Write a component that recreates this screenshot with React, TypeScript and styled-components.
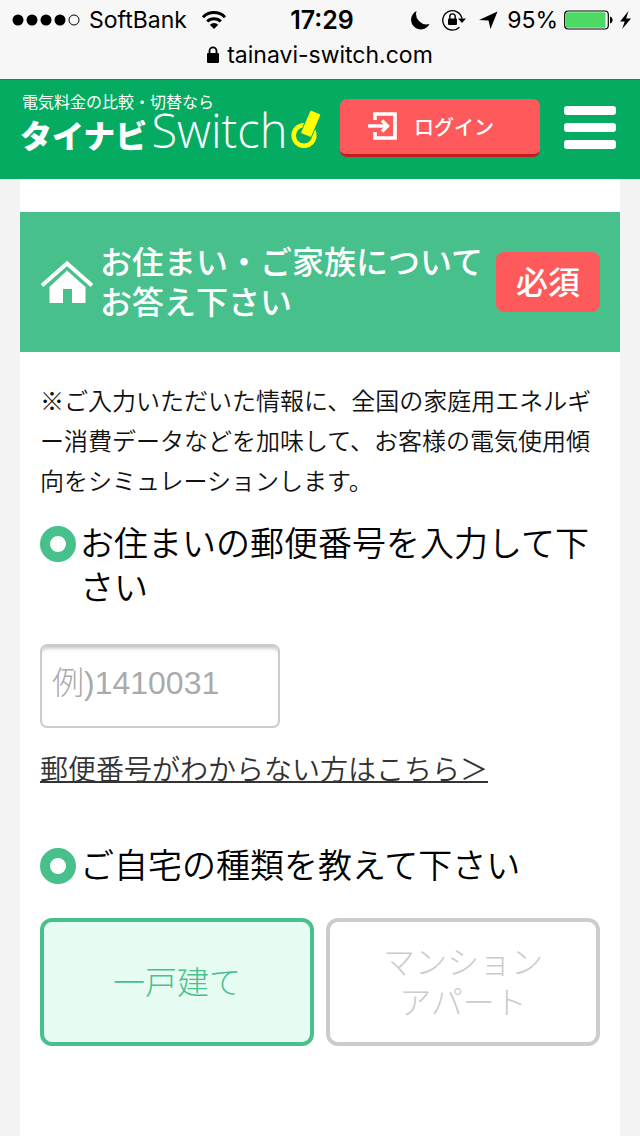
import React, { useState } from "react";
import styled, { createGlobalStyle } from "styled-components";

const jp = `"Noto Sans CJK JP", sans-serif`;
const green = "#48c08c";
const red = "#fe5a5b";

const GlobalStyle = createGlobalStyle`
  * { box-sizing: border-box; }
  body { margin: 0; background: #f3f3f3; color: #111; font-family: ${jp}; }
`;

const Page = styled.div`
  display: flex;
  flex-direction: column;
  min-height: 100vh;
`;

const StatusBar = styled.div`
  height: 80px;
  background: #f7f7f7;
  border-bottom: 1px solid #2f7a5d;
  color: #000;
  font-family: Inter, sans-serif;
  font-size: 23px;
`;

const StatusRow = styled.div`
  display: grid;
  grid-template-columns: 1fr auto 1fr;
  align-items: center;
  height: 40px;
  padding: 0 8px 0 12px;
`;

const StatusGroup = styled.div<{ $end?: boolean }>`
  display: flex;
  align-items: center;
  justify-content: ${(p) => (p.$end ? "flex-end" : "flex-start")};
  gap: ${(p) => (p.$end ? "6px" : "8px")};
`;

const Carrier = styled.span`
  margin-right: 6px;
`;

const StatusIcons = styled.div`
  display: flex;
  align-items: center;
  gap: 12px;
  margin-right: 3px;
`;

const Clock = styled.strong`
  font-size: 25px;
  font-weight: 600;
`;

const AddressRow = styled.div`
  display: flex;
  align-items: center;
  justify-content: center;
  gap: 8px;
  height: 30px;
`;

const Header = styled.header`
  display: flex;
  align-items: center;
  height: 99px;
  padding: 0 24px 4px 20px;
  background: #06ab62;
`;

const Logo = styled.a`
  display: flex;
  flex-direction: column;
  align-self: flex-start;
  margin-top: 12px;
  color: #fff;
  text-decoration: none;
`;

const Tagline = styled.span`
  padding-left: 2px;
  font-size: 16px;
  line-height: 18px;
`;

const WordMark = styled.span`
  display: flex;
  align-items: baseline;
  height: 34px;
  line-height: 34px;
`;

const WordJa = styled.span`
  font-size: 32px;
  font-weight: 900;
`;

const WordEn = styled.span`
  margin: 0 4px;
  font-family: "Open Sans", sans-serif;
  font-size: 47px;
  font-weight: 300;
`;

const LoginButton = styled.button`
  display: flex;
  align-items: center;
  gap: 16px;
  width: 200px;
  height: 58px;
  margin: 0 24px 0 auto;
  padding: 0 0 0 28px;
  border: 0;
  border-bottom: 3px solid #c41c20;
  border-radius: 7px;
  background: ${red};
  color: #fff;
  font-family: ${jp};
  font-size: 20px;
  font-weight: 500;
`;

const MenuButton = styled.button`
  display: flex;
  flex-direction: column;
  gap: 8px;
  width: 52px;
  padding: 0;
  border: 0;
  background: none;
`;

const MenuBar = styled.span`
  height: 9px;
  border-radius: 3px;
  background: #fff;
`;

const Main = styled.main`
  flex: 1;
  margin: 0 20px;
  padding-top: 33px;
  background: #fff;
`;

const SectionHead = styled.div`
  display: flex;
  align-items: center;
  gap: 6px;
  padding: 28px 20px;
  background: ${green};
  color: #fff;
`;

const SectionTitle = styled.h1`
  flex: 1;
  margin: 0;
  padding-bottom: 4px;
  font-size: 32px;
  font-weight: 500;
  line-height: 40px;
`;

const Required = styled.span`
  padding: 8px 20px 12px;
  border-radius: 8px;
  background: ${red};
  font-size: 32px;
  font-weight: 500;
  line-height: 40px;
`;

const Form = styled.form`
  padding: 28px 20px;
`;

const Note = styled.p`
  margin: 0 0 20px;
  font-size: 24px;
  font-weight: 350;
  line-height: 40px;
  line-break: anywhere;
`;

const Question = styled.div`
  display: flex;
  align-items: flex-start;
  gap: 4px;
  color: #000;
  font-size: 34px;
  font-weight: 350;
  line-height: 44px;
`;

const Bullet = styled.span`
  flex: none;
  width: 36px;
  height: 36px;
  margin-top: 6px;
  border: 10px solid ${green};
  border-radius: 50%;
`;

const ZipInput = styled.input`
  display: block;
  width: 240px;
  height: 84px;
  margin: 36px 0 20px;
  padding: 0 10px 6px;
  border: 2px solid #ccc;
  border-radius: 7px;
  background: #fff;
  box-shadow: inset 0 5px 4px -3px #bbb;
  font-family: "Liberation Sans", ${jp};
  font-size: 32px;
  font-weight: 300;

  &::placeholder { color: #aaa; }
`;

const HelpLink = styled.a`
  display: block;
  width: fit-content;
  margin-bottom: 54px;
  color: #333;
  font-size: 28px;
  font-weight: 350;
  line-height: 40px;
  text-decoration: underline;
  text-decoration-thickness: 2px;
  text-underline-offset: 1px;
  text-decoration-skip-ink: none;
`;

const Fieldset = styled.fieldset`
  min-width: 0;
  margin: 0;
  padding: 0;
  border: 0;
`;

const Legend = styled.legend`
  padding: 0;
`;

const Options = styled.div`
  display: grid;
  grid-template-columns: 1fr 1fr;
  gap: 12px;
  margin-top: 32px;
`;

const Option = styled.label<{ $checked: boolean }>`
  display: flex;
  align-items: center;
  justify-content: center;
  height: 128px;
  padding-bottom: 4px;
  border: 4px solid ${(p) => (p.$checked ? green : "#ccc")};
  border-radius: 12px;
  background: ${(p) => (p.$checked ? "#e6fcf2" : "#fff")};
  color: ${(p) => (p.$checked ? green : "#ccc")};
  font-size: 32px;
  font-weight: 300;
  line-height: 40px;
  text-align: center;
  white-space: pre-line;
`;

const HiddenRadio = styled.input`
  position: absolute;
  opacity: 0;
  pointer-events: none;
`;

const homeTypes = [
  { value: "house", label: "一戸建て" },
  { value: "apartment", label: "マンション\nアパート" },
];

const Signal = () => (
  <svg width="69" height="14" viewBox="0 0 69 14">
    {[6, 20, 34, 48].map((x) => <circle key={x} cx={x} cy="7" r="5.5" />)}
    <circle cx="62" cy="7" r="5" fill="none" stroke="#000" />
  </svg>
);

const Wifi = () => (
  <svg width="26" height="20" viewBox="0 0 26 20">
    <path d="M2 7.2a15.5 15.5 0 0 1 22 0M6.2 11.5a9.6 9.6 0 0 1 13.6 0" fill="none" stroke="#000" strokeWidth="3" />
    <path d="M13 19l-4.2-4.3a6 6 0 0 1 8.4 0z" />
  </svg>
);

const Moon = () => (
  <svg width="20" height="20" viewBox="0 0 20 20">
    <path d="M6.5 1A9.7 9.7 0 1 0 19.500 14A10.500 10.500 0 0 1 6.500 1z" />
  </svg>
);

const RotationLock = () => (
  <svg width="24" height="22" viewBox="0 0 24 22">
    <path d="M17.4 18.2A9.7 9.7 0 1 1 20 9.5" fill="none" stroke="#000" strokeWidth="1.4" />
    <path d="M16 9.5h8l-4 4.5z" />
    <rect x="6" y="9.5" width="9" height="6.5" rx="1" />
    <path d="M7.8 10V7.6a2.7 2.7 0 0 1 5.4 0V10" fill="none" stroke="#000" strokeWidth="1.4" />
  </svg>
);

const Location = () => (
  <svg width="20" height="20" viewBox="0 0 20 20">
    <path d="M19.5 1.500L12.500 19l-2-8.500L1 10z" />
  </svg>
);

const Battery = () => (
  <svg width="49" height="20" viewBox="0 0 49 20">
    <rect x=".7" y="1" width="43.6" height="18" rx="3.5" fill="#fff" stroke="#000" strokeWidth="1.2" />
    <rect x="2" y="2.3" width="39.5" height="15.4" rx="1.5" fill="#4cd964" />
    <path d="M46 6.5c3.5 1 3.5 6 0 7z" />
  </svg>
);

const Bolt = () => (
  <svg width="13" height="20" viewBox="0 0 13 20">
    <path d="M9.5 1L1 11.5h4.7L3.2 19 12 8.5H7.2z" />
  </svg>
);

const Padlock = () => (
  <svg width="12" height="18" viewBox="0 0 12 18">
    <rect x="0" y="7" width="12" height="10" rx="1" />
    <path d="M2.5 8V4.8a3.5 3.5 0 0 1 7 0V8" fill="none" stroke="#000" strokeWidth="1.8" />
  </svg>
);

const SwitchMark = () => (
  <svg width="30" height="38" viewBox="0 0 30 38">
    <circle cx="13" cy="25.5" r="10.3" fill="none" stroke="#ff0" strokeWidth="4.6" />
    <path
      d="M20 1.500l8.500 3.500L19.500 26l-8.500-3.500z"
      fill="#ff0"
      stroke="#06ab62"
      strokeWidth="3.4"
      strokeLinejoin="round"
    />
    <path d="M20 1.500l8.500 3.500L19.500 26l-8.500-3.500z" fill="#ff0" stroke="#ff0" strokeWidth="1.6" strokeLinejoin="round" />
  </svg>
);

const LoginIcon = () => (
  <svg width="30" height="30" viewBox="0 0 30 30" fill="none" stroke="#fff">
    <path d="M7 9V3h20v24H7v-6" strokeWidth="3.6" />
    <path d="M0 15h19" strokeWidth="3.4" />
    <path d="M14 9.5l5.5 5.5-5.5 5.5" strokeWidth="3.4" />
  </svg>
);

const House = () => (
  <svg width="54" height="44" viewBox="0 0 54 44">
    <path d="M2 25.5L27 3.5l25 22" fill="none" stroke="#fff" strokeWidth="4" />
    <path d="M27 10.5L45.5 27v16H32V29h-9v14H9.5V27z" fill="#fff" />
  </svg>
);

export default function App() {
  const [homeType, setHomeType] = useState("house");
  return (
    <Page>
      <GlobalStyle />
      <StatusBar>
        <StatusRow>
          <StatusGroup>
            <Signal />
            <Carrier>SoftBank</Carrier>
            <Wifi />
          </StatusGroup>
          <Clock>17:29</Clock>
          <StatusGroup $end>
            <StatusIcons>
              <Moon />
              <RotationLock />
              <Location />
            </StatusIcons>
            <span>95%</span>
            <Battery />
            <Bolt />
          </StatusGroup>
        </StatusRow>
        <AddressRow>
          <Padlock />
          <span>tainavi-switch.com</span>
        </AddressRow>
      </StatusBar>

      <Header>
        <Logo href="#">
          <Tagline>電気料金の比較・切替なら</Tagline>
          <WordMark>
            <WordJa>タイナビ</WordJa>
            <WordEn>Switch</WordEn>
            <SwitchMark />
          </WordMark>
        </Logo>
        <LoginButton type="button">
          <LoginIcon />
          ログイン
        </LoginButton>
        <MenuButton type="button" aria-label="メニュー">
          <MenuBar />
          <MenuBar />
          <MenuBar />
        </MenuButton>
      </Header>

      <Main>
        <SectionHead>
          <House />
          <SectionTitle>お住まい・ご家族についてお答え下さい</SectionTitle>
          <Required>必須</Required>
        </SectionHead>
        <Form>
          <Note>
            ※ご入力いただいた情報に、全国の家庭用エネルギー消費データなどを加味して、お客様の電気使用傾向をシミュレーションします。
          </Note>
          <Question>
            <Bullet />
            <label htmlFor="zip">お住まいの郵便番号を入力して下さい</label>
          </Question>
          <ZipInput id="zip" type="text" inputMode="numeric" placeholder="例)1410031" />
          <HelpLink href="#">郵便番号がわからない方はこちら＞</HelpLink>
          <Fieldset>
            <Legend>
              <Question>
                <Bullet />
                <span>ご自宅の種類を教えて下さい</span>
              </Question>
            </Legend>
            <Options>
              {homeTypes.map((t) => (
                <Option key={t.value} $checked={homeType === t.value}>
                  <HiddenRadio
                    type="radio"
                    name="homeType"
                    value={t.value}
                    checked={homeType === t.value}
                    onChange={() => setHomeType(t.value)}
                  />
                  {t.label}
                </Option>
              ))}
            </Options>
          </Fieldset>
        </Form>
      </Main>
    </Page>
  );
}
